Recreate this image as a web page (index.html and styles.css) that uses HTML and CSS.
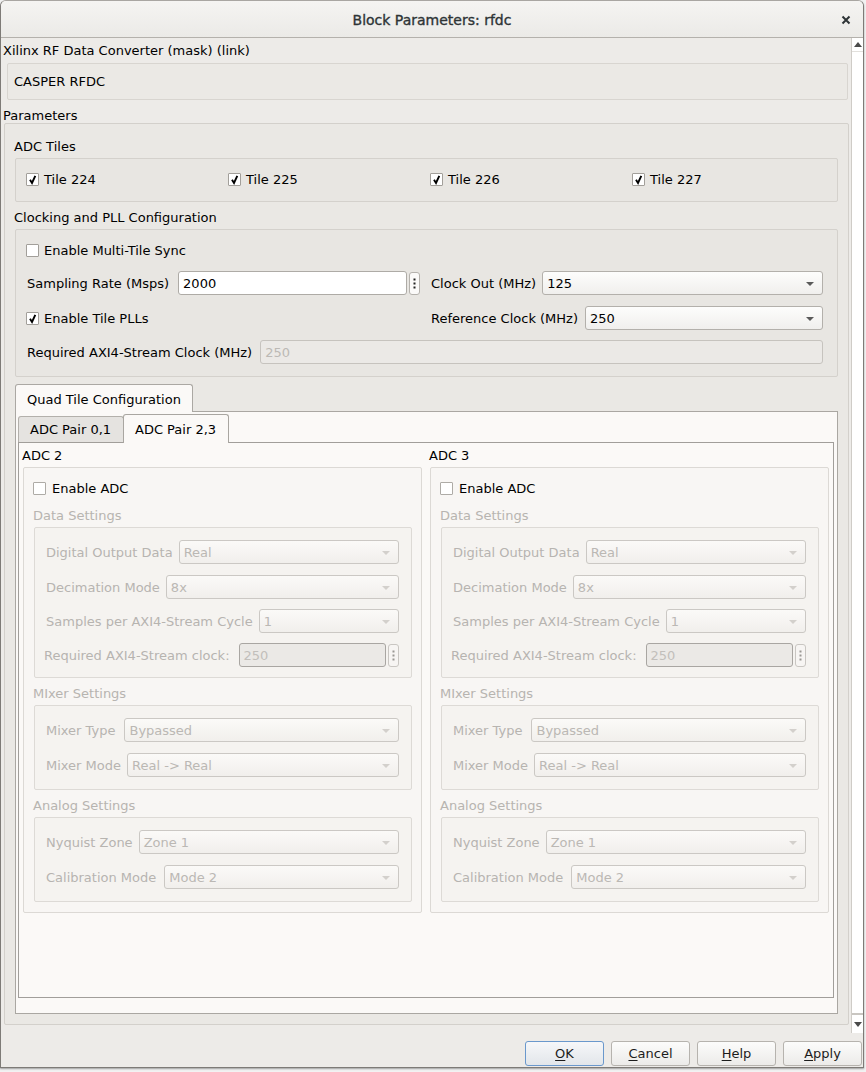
FILE: index.html
```html
<!DOCTYPE html>
<html>
<head>
<meta charset="utf-8">
<title>Block Parameters: rfdc</title>
<link rel="stylesheet" href="styles.css">
</head>
<body>
<div class="dialog">
  <div class="titlebar">
    <span></span>
    <span class="title">Block Parameters: rfdc</span>
    <span class="close"><svg width="10" height="10" viewBox="0 0 10 10"><path d="M1.5 1.5 L8.5 8.5 M8.5 1.5 L1.5 8.5" stroke="#2e3436" stroke-width="2" fill="none"/></svg></span>
  </div>
  <div class="main">
    <div class="scroll">
      <div class="mask-title">Xilinx RF Data Converter (mask) (link)</div>
      <div class="desc">CASPER RFDC</div>
      <div class="params-title">Parameters</div>
      <div class="params">
        <div class="glabel">ADC Tiles</div>
        <div class="gbox tiles">
          <div class="cb"><span class="chk"><svg width="11" height="11" viewBox="0 0 11 11"><path d="M3 5.8 L5 9 L8.3 1.8" stroke="#000" stroke-width="1.9" fill="none"/></svg></span>Tile 224</div>
          <div class="cb"><span class="chk"><svg width="11" height="11" viewBox="0 0 11 11"><path d="M3 5.8 L5 9 L8.3 1.8" stroke="#000" stroke-width="1.9" fill="none"/></svg></span>Tile 225</div>
          <div class="cb"><span class="chk"><svg width="11" height="11" viewBox="0 0 11 11"><path d="M3 5.8 L5 9 L8.3 1.8" stroke="#000" stroke-width="1.9" fill="none"/></svg></span>Tile 226</div>
          <div class="cb"><span class="chk"><svg width="11" height="11" viewBox="0 0 11 11"><path d="M3 5.8 L5 9 L8.3 1.8" stroke="#000" stroke-width="1.9" fill="none"/></svg></span>Tile 227</div>
        </div>
        <div class="glabel">Clocking and PLL Configuration</div>
        <div class="gbox clock">
          <div class="crow r1">
            <div class="cb"><span class="chk"></span>Enable Multi-Tile Sync</div>
          </div>
          <div class="crow r2">
            <div class="field">
              <span class="flabel gap3">Sampling Rate (Msps)</span>
              <span class="input">2000</span>
              <span class="dots"><svg width="3" height="11" viewBox="0 0 3 11"><rect x="0.5" y="0.5" width="2" height="2" fill="#222"/><rect x="0.5" y="4.5" width="2" height="2" fill="#222"/><rect x="0.5" y="8.5" width="2" height="2" fill="#222"/></svg></span>
            </div>
            <div class="field">
              <span class="flabel">Clock Out (MHz)</span>
              <span class="select"><span>125</span><svg width="8" height="4" viewBox="0 0 8 4"><path d="M0 0 H8 L4 4 Z" fill="#5a5a5a"/></svg></span>
            </div>
          </div>
          <div class="crow r3">
            <div class="cb"><span class="chk"><svg width="11" height="11" viewBox="0 0 11 11"><path d="M3 5.8 L5 9 L8.3 1.8" stroke="#000" stroke-width="1.9" fill="none"/></svg></span>Enable Tile PLLs</div>
            <div class="field">
              <span class="flabel gap1">Reference Clock (MHz)</span>
              <span class="select"><span>250</span><svg width="8" height="4" viewBox="0 0 8 4"><path d="M0 0 H8 L4 4 Z" fill="#5a5a5a"/></svg></span>
            </div>
          </div>
          <div class="crow r4">
            <div class="field wide">
              <span class="flabel gap2">Required AXI4-Stream Clock (MHz)</span>
              <span class="input dis">250</span>
            </div>
          </div>
        </div>

        <div class="qtabs">
          <div class="tabbar"><span class="tab sel">Quad Tile Configuration</span></div>
          <div class="pane">
            <div class="itabbar">
              <span class="itab">ADC Pair 0,1</span>
              <span class="itab sel">ADC Pair 2,3</span>
            </div>
            <div class="ipane">
              <div class="adc">
                <div class="adc-title">ADC 2</div>
                <div class="adcbox">
                  <div class="cb en"><span class="chk"></span>Enable ADC</div>
                  <div class="dlabel first">Data Settings</div>
                  <div class="sub data">
                    <div class="srow"><span class="dl">Digital Output Data</span><span class="select dis"><span>Real</span><svg width="8" height="4" viewBox="0 0 8 4"><path d="M0 0 H8 L4 4 Z" fill="#d3d0cc"/></svg></span></div>
                    <div class="srow"><span class="dl">Decimation Mode</span><span class="select dis"><span>8x</span><svg width="8" height="4" viewBox="0 0 8 4"><path d="M0 0 H8 L4 4 Z" fill="#d3d0cc"/></svg></span></div>
                    <div class="srow r3"><span class="dl">Samples per AXI4-Stream Cycle</span><span class="select dis"><span>1</span><svg width="8" height="4" viewBox="0 0 8 4"><path d="M0 0 H8 L4 4 Z" fill="#d3d0cc"/></svg></span></div>
                    <div class="srow r4"><span class="dl req">Required AXI4-Stream clock:</span><span class="input dis2">250</span><span class="dots dis"><svg width="3" height="11" viewBox="0 0 3 11"><rect x="0.5" y="0.5" width="2" height="2" fill="#9a9793"/><rect x="0.5" y="4.5" width="2" height="2" fill="#9a9793"/><rect x="0.5" y="8.5" width="2" height="2" fill="#9a9793"/></svg></span></div>
                  </div>
                  <div class="dlabel">MIxer Settings</div>
                  <div class="sub">
                    <div class="srow"><span class="dl gap3">Mixer Type</span><span class="select dis"><span>Bypassed</span><svg width="8" height="4" viewBox="0 0 8 4"><path d="M0 0 H8 L4 4 Z" fill="#d3d0cc"/></svg></span></div>
                    <div class="srow"><span class="dl">Mixer Mode</span><span class="select dis"><span>Real -&gt; Real</span><svg width="8" height="4" viewBox="0 0 8 4"><path d="M0 0 H8 L4 4 Z" fill="#d3d0cc"/></svg></span></div>
                  </div>
                  <div class="dlabel">Analog Settings</div>
                  <div class="sub">
                    <div class="srow"><span class="dl">Nyquist Zone</span><span class="select dis"><span>Zone 1</span><svg width="8" height="4" viewBox="0 0 8 4"><path d="M0 0 H8 L4 4 Z" fill="#d3d0cc"/></svg></span></div>
                    <div class="srow"><span class="dl gap2">Calibration Mode</span><span class="select dis"><span>Mode 2</span><svg width="8" height="4" viewBox="0 0 8 4"><path d="M0 0 H8 L4 4 Z" fill="#d3d0cc"/></svg></span></div>
                  </div>
                </div>
              </div>
              <div class="adc">
                <div class="adc-title">ADC 3</div>
                <div class="adcbox">
                  <div class="cb en"><span class="chk"></span>Enable ADC</div>
                  <div class="dlabel first">Data Settings</div>
                  <div class="sub data">
                    <div class="srow"><span class="dl">Digital Output Data</span><span class="select dis"><span>Real</span><svg width="8" height="4" viewBox="0 0 8 4"><path d="M0 0 H8 L4 4 Z" fill="#d3d0cc"/></svg></span></div>
                    <div class="srow"><span class="dl">Decimation Mode</span><span class="select dis"><span>8x</span><svg width="8" height="4" viewBox="0 0 8 4"><path d="M0 0 H8 L4 4 Z" fill="#d3d0cc"/></svg></span></div>
                    <div class="srow r3"><span class="dl">Samples per AXI4-Stream Cycle</span><span class="select dis"><span>1</span><svg width="8" height="4" viewBox="0 0 8 4"><path d="M0 0 H8 L4 4 Z" fill="#d3d0cc"/></svg></span></div>
                    <div class="srow r4"><span class="dl req">Required AXI4-Stream clock:</span><span class="input dis2">250</span><span class="dots dis"><svg width="3" height="11" viewBox="0 0 3 11"><rect x="0.5" y="0.5" width="2" height="2" fill="#9a9793"/><rect x="0.5" y="4.5" width="2" height="2" fill="#9a9793"/><rect x="0.5" y="8.5" width="2" height="2" fill="#9a9793"/></svg></span></div>
                  </div>
                  <div class="dlabel">MIxer Settings</div>
                  <div class="sub">
                    <div class="srow"><span class="dl gap3">Mixer Type</span><span class="select dis"><span>Bypassed</span><svg width="8" height="4" viewBox="0 0 8 4"><path d="M0 0 H8 L4 4 Z" fill="#d3d0cc"/></svg></span></div>
                    <div class="srow"><span class="dl">Mixer Mode</span><span class="select dis"><span>Real -&gt; Real</span><svg width="8" height="4" viewBox="0 0 8 4"><path d="M0 0 H8 L4 4 Z" fill="#d3d0cc"/></svg></span></div>
                  </div>
                  <div class="dlabel">Analog Settings</div>
                  <div class="sub">
                    <div class="srow"><span class="dl">Nyquist Zone</span><span class="select dis"><span>Zone 1</span><svg width="8" height="4" viewBox="0 0 8 4"><path d="M0 0 H8 L4 4 Z" fill="#d3d0cc"/></svg></span></div>
                    <div class="srow"><span class="dl gap2">Calibration Mode</span><span class="select dis"><span>Mode 2</span><svg width="8" height="4" viewBox="0 0 8 4"><path d="M0 0 H8 L4 4 Z" fill="#d3d0cc"/></svg></span></div>
                  </div>
                </div>
              </div>
            </div>
          </div>
        </div>
      </div>
    </div>
    <div class="vscroll">
      <span class="sbtn up"><svg width="8" height="5" viewBox="0 0 8 5"><path d="M0 5 H8 L4 0 Z" fill="#4a4a4a"/></svg></span>
      <span class="sthumb"></span>
      <span class="sbtn down"><svg width="8" height="5" viewBox="0 0 8 5"><path d="M0 0 H8 L4 5 Z" fill="#4a4a4a"/></svg></span>
    </div>
  </div>
  <div class="footer">
    <span class="btn ok"><u>O</u>K</span>
    <span class="btn"><u>C</u>ancel</span>
    <span class="btn"><u>H</u>elp</span>
    <span class="btn"><u>A</u>pply</span>
  </div>
</div>
</body>
</html>
```
FILE: styles.css
```css
* { box-sizing: border-box; }
html, body { margin: 0; padding: 0; }
body {
  width: 866px;
  height: 1072px;
  overflow: hidden;
  background: #f2f2f2;
  font-family: "DejaVu Sans", "Noto Sans", sans-serif;
  font-size: 13px;
  color: #000;
}
.dialog {
  width: 864px;
  height: 1068px;
  display: flex;
  flex-direction: column;
  background: #edebe8;
  border: 1px solid #7e7b77;
  border-top-color: #a9a6a2;
  border-radius: 6px 6px 0 0;
  box-shadow: 0 1px 2px rgba(0,0,0,0.35);
}
.titlebar {
  height: 37px;
  flex: none;
  display: grid;
  grid-template-columns: 1fr auto 1fr;
  align-items: center;
  border-bottom: 1px solid #b4b1ac;
  border-radius: 5px 5px 0 0;
  background: linear-gradient(#f5f4f2, #ebeae7);
}
.title {
  font-weight: normal;
  font-size: 14px;
  color: #2e3436;
  padding-top: 1px;
  -webkit-text-stroke: 0.35px #2e3436;
}
.close {
  justify-self: end;
  margin-right: 12px;
  display: flex;
  padding-top: 1px;
}
.main {
  height: 995px;
  flex: none;
  display: flex;
}
.scroll {
  flex: 1;
  padding: 3px 0 0 2px;
  overflow: hidden;
}
.mask-title {
  line-height: 18px;
  height: 18px;
  padding-top: 1px;
}
.desc {
  margin: 4px 3px 0 4px;
  height: 37px;
  border: 1px solid #d8d5d0;
  border-radius: 2px;
  background: #ebe9e5;
  padding-left: 6px;
  display: flex;
  align-items: center;
}
.params-title {
  margin-top: 7px;
  line-height: 16px;
  height: 16px;
  padding-top: 1px;
}
.params {
  margin: 0 2px 0 1px;
  height: 902px;
  border: 1px solid #d3d0cb;
  border-radius: 2px;
  background: #eae8e4;
  padding: 13px 10px 10px 10px;
}
.glabel {
  line-height: 18px;
  height: 18px;
  margin-left: -1px;
  padding-top: 1px;
}
.gbox {
  margin-top: 3px;
  border: 1px solid #d4d1cc;
  border-radius: 2px;
  background: #e8e6e2;
}
.tiles {
  height: 44px;
  display: grid;
  grid-template-columns: 202px 202px 202px 1fr;
  align-items: center;
  padding-left: 10px;
  padding-bottom: 1px;
  margin-bottom: 6px;
}
.cb {
  display: flex;
  align-items: center;
  height: 24px;
  white-space: nowrap;
}
.chk {
  width: 13px;
  height: 13px;
  flex: none;
  border: 1px solid #a29f9a;
  background: #fff;
  border-radius: 1px;
  margin-right: 5px;
  display: flex;
  align-items: center;
  justify-content: center;
}
.clock {
  padding: 8px 14px 12px 10px;
}
.crow {
  display: grid;
  grid-template-columns: 394px 1fr;
  column-gap: 11px;
  align-items: center;
  height: 24px;
}
.crow.r2 { margin-top: 9px; }
.crow.r3 { margin-top: 11px; }
.crow.r4 { margin-top: 10px; }
.field {
  display: flex;
  align-items: center;
  height: 24px;
  min-width: 0;
}
.crow .field:first-child { padding-left: 1px; }
.field.wide { grid-column: 1 / 3; }
.flabel {
  white-space: nowrap;
  margin-right: 6px;
}
.flabel.gap1 { margin-right: 7px; }
.flabel.gap2 { margin-right: 8px; }
.flabel.gap3 { margin-right: 9px; }
.input {
  flex: 1;
  height: 24px;
  border: 1px solid #aeaba6;
  border-radius: 3px;
  background: #fff;
  padding-left: 4px;
  display: flex;
  align-items: center;
  min-width: 0;
}
.input.dis {
  background: #ebe9e6;
  border-color: #c6c3be;
  color: #bcb9b5;
}
.input.dis2 {
  background: #ebe9e6;
  border-color: #a9a6a2;
  color: #c2bfbb;
}
.dots {
  width: 11px;
  height: 23px;
  flex: none;
  margin-left: 2px;
  border: 1px solid #b5b2ad;
  border-radius: 3px;
  background: #fbfaf9;
  display: flex;
  align-items: center;
  justify-content: center;
}
.dots.dis { border-color: #c9c6c2; background: #f7f5f3; }
.select {
  flex: 1;
  height: 24px;
  border: 1px solid #b3b0ab;
  border-radius: 3px;
  background: linear-gradient(#fdfdfc, #f0efed);
  display: flex;
  align-items: center;
  justify-content: space-between;
  padding: 0 8px 0 4px;
  min-width: 0;
}
.select svg { flex: none; margin-top: 1px; }
.select.dis {
  border-color: #cbc8c4;
  background: linear-gradient(#fbfaf8, #f1efec);
  color: #bbb8b4;
}
.qtabs {
  margin-top: 7px;
}
.tabbar {
  display: flex;
  height: 27px;
}
.tab {
  height: 28px;
  padding: 1px 0 0 11px;
  width: 178px;
  border: 1px solid #aba8a3;
  border-bottom: none;
  border-radius: 3px 3px 0 0;
  background: #fbf9f7;
  display: flex;
  align-items: center;
  position: relative;
  z-index: 1;
}
.pane {
  height: 603px;
  border: 1px solid #aaa7a2;
  background: #fbf9f7;
  padding: 3px 3px 15px 2px;
}
.itabbar {
  display: flex;
  align-items: flex-end;
  height: 27px;
}
.itab {
  width: 106px;
  height: 26px;
  border: 1px solid #b3b0ab;
  border-bottom: none;
  border-radius: 3px 3px 0 0;
  background: #e5e3e0;
  display: flex;
  align-items: center;
  padding-left: 11px;
  margin-right: -1px;
}
.itab.sel {
  height: 29px;
  width: 106px;
  background: #fbf9f7;
  border-color: #a9a6a1;
  margin-bottom: -1px;
  position: relative;
  z-index: 1;
}
.ipane {
  height: 556px;
  border: 1px solid #a19e9a;
  background: #fbf9f7;
  display: grid;
  grid-template-columns: 1fr 1fr;
  column-gap: 7px;
  padding: 3px 4px 0 3px;
  align-items: start;
}
.adc-title {
  line-height: 18px;
  height: 18px;
  padding-top: 1px;
}
.adcbox {
  margin: 3px 0 0 1px;
  border: 1px solid #dcd9d5;
  border-radius: 2px;
  background: #f8f6f4;
  padding: 8px 9px 10px 9px;
}
.cb.en .chk { border-color: #aeaba6; margin-right: 6px; }
.dlabel {
  color: #b7b4b0;
  line-height: 18px;
  height: 18px;
  margin-top: 6px;
  padding-top: 1px;
}
.sub {
  margin: 3px 0 0 1px;
  border: 1px solid #dddad6;
  border-radius: 2px;
  background: #f5f3f0;
  padding: 12px 12px 12px 11px;
}
.sub.data { padding-bottom: 10px; }
.srow {
  display: flex;
  align-items: center;
  height: 24px;
}
.srow + .srow { margin-top: 11px; }
.srow.r3, .srow.r4 { margin-top: 10px; }
.dl {
  color: #b7b4b0;
  white-space: nowrap;
  margin-right: 6px;
}
.dl.gap2 { margin-right: 8px; }
.dl.gap3 { margin-right: 9px; }
.dl.req { margin-left: -2px; margin-right: 9px; }
.vscroll {
  width: 12px;
  flex: none;
  background: #fff;
  border-left: 1px solid #cfccc7;
  display: flex;
  flex-direction: column;
}
.sbtn {
  height: 14px;
  flex: none;
  display: flex;
  align-items: center;
  justify-content: center;
}
.sbtn.up { border-bottom: 1px solid #e2e0dc; }
.sbtn.down { border-top: 1px solid #c9c6c1; height: 19px; }
.sthumb {
  flex: 1;
  border-bottom: 1px solid #c9c6c1;
}
.footer {
  flex: 1;
  display: flex;
  justify-content: flex-end;
  gap: 7px;
  padding: 8px 1px 0 0;
}
.btn {
  width: 79px;
  height: 25px;
  border: 1px solid #b6b3ae;
  border-radius: 3px;
  background: linear-gradient(#fcfcfb, #ecebe9);
  display: flex;
  align-items: center;
  justify-content: center;
  color: #1c1c1c;
}
.btn u { text-underline-offset: 2px; }
.btn.ok {
  border-color: #6a98cc;
  background: linear-gradient(#f6f7f9, #e2e6ea);
}
```
